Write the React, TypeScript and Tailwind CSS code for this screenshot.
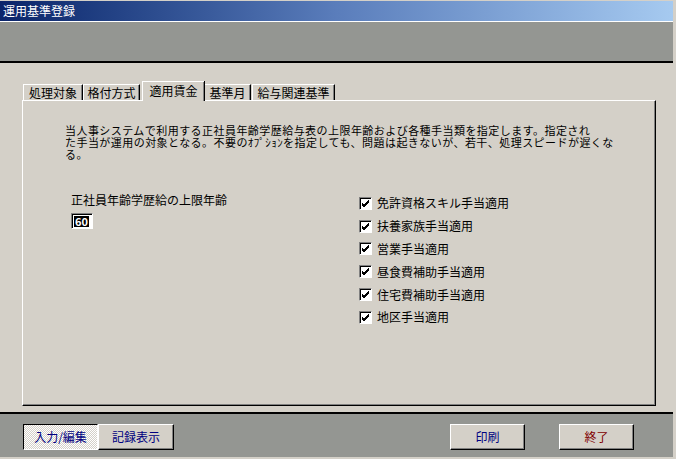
import React from "react";

const tabs = [
  { label: "処理対象", cls: "ml-[1px] w-[60px]" },
  { label: "格付方式", cls: "w-[57px]" },
  { label: "適用賃金", cls: "ml-[2px] w-[62px]", active: true },
  { label: "基準月", cls: "w-[47px]" },
  { label: "給与関連基準", cls: "ml-[1px] w-[83px]" },
];

const options = [
  "免許資格スキル手当適用",
  "扶養家族手当適用",
  "営業手当適用",
  "昼食費補助手当適用",
  "住宅費補助手当適用",
  "地区手当適用",
];

function CheckBox() {
  return (
    <span className="flex h-[13px] w-[13px] items-center justify-center border border-t-[#808080] border-l-[#808080] border-r-white border-b-white bg-white shadow-[inset_1px_1px_0_#000]">
      <svg width="9" height="9" viewBox="0 0 9 9">
        <path d="M1 4 L3 6 L8 1 M1 5 L3 7 L8 2 M1 6 L3 8 L8 3" stroke="#000" strokeWidth="1" fill="none" />
      </svg>
    </span>
  );
}

function Button({ label, color, pressed, cls }: { label: string; color: string; pressed?: boolean; cls: string }) {
  return (
    <button
      className={
        pressed
          ? `flex h-[26px] items-center justify-center border border-t-black border-l-black border-r-white border-b-white bg-[conic-gradient(#fff_25%,#d4d0c8_0_50%,#fff_0_75%,#d4d0c8_0)] bg-size-[2px_2px] text-[12px] ${color} ${cls}`
          : `flex h-[26px] items-center justify-center border border-t-white border-l-white border-r-black border-b-black bg-[#d4d0c8] shadow-[inset_-1px_-1px_0_#808080] text-[12px] ${color} ${cls}`
      }
    >
      {label}
    </button>
  );
}

export default function App() {
  return (
    <div
      className="flex h-[459px] w-[676px] bg-[#d4d0c8] text-black"
      style={{ fontFamily: '"Noto Sans CJK JP", "Noto Sans", sans-serif' }}
    >
      <div className="flex w-[673px] flex-col">
        {/* title bar */}
        <div className="h-[21px] border-t border-[#d4d0c8] bg-linear-to-r from-[#0a246a] via-[#5a7dbb] to-[#a6caf0] pl-[3px] text-[12px] leading-[20px] text-white">
          運用基準登録
        </div>
        <div className="h-px bg-white" />
        <div className="h-[39px] bg-[#949692]" />
        <div className="h-[2px] bg-black" />

        {/* body */}
        <div className="flex h-[349px] flex-col pl-[22px] pt-[18px]">
          {/* tabs */}
          <div className="flex h-[19px] items-end">
            {tabs.map((t) =>
              t.active ? (
                <div
                  key={t.label}
                  className={`relative z-10 -mb-px flex h-[20px] items-start justify-center border-t border-l border-white bg-[#d4d0c8] pt-[1px] text-[12px] leading-[16px] shadow-[1px_0_0_#000,inset_-1px_0_0_#808080] ${t.cls}`}
                >
                  {t.label}
                </div>
              ) : (
                <div
                  key={t.label}
                  className={`flex h-[16px] items-center justify-center border-t border-l border-r border-t-white border-l-white border-r-black bg-[#d4d0c8] text-[12px] leading-[14px] shadow-[inset_-1px_0_0_#808080] ${t.cls}`}
                >
                  {t.label}
                </div>
              )
            )}
          </div>

          {/* panel */}
          <div className="h-[306px] w-[634px] border border-t-white border-l-white border-r-black border-b-black shadow-[inset_-1px_-1px_0_#808080] pl-[42px] pt-[23px]">
            <p className="text-[11px] leading-[12px] tracking-[0.45px]">
              当人事システムで利用する正社員年齢学歴給与表の上限年齢および各種手当類を指定します。指定され
              <br />
              た手当が運用の対象となる。不要のｵﾌﾟｼｮﾝを指定しても、問題は起きないが、若干、処理スピードが遅くな
              <br />
              る。
            </p>

            <div className="mt-[32px] flex">
              <div className="w-[294px] pl-[6px]">
                <div className="text-[12px] leading-[16px]">正社員年齢学歴給の上限年齢</div>
                <div className="mt-[5px] flex h-[16px] w-[22px] items-center border border-t-[#808080] border-l-[#808080] border-r-white border-b-white bg-white pl-[2px] shadow-[inset_1px_1px_0_#000]">
                  <span className="bg-black px-px text-[11px] font-bold leading-[11px] text-white">60</span>
                </div>
              </div>

              <div className="flex flex-col">
                {options.map((o) => (
                  <div key={o} className="flex h-[22.8px] items-center gap-[5px]">
                    <CheckBox />
                    <span className="text-[12px] leading-[16px]">{o}</span>
                  </div>
                ))}
              </div>
            </div>
          </div>
        </div>

        <div className="h-[2px] bg-black" />

        {/* bottom bar */}
        <div className="flex h-[43px] items-start bg-[#949692] pt-[10px]">
          <Button label="入力/編集" color="text-[#000080]" pressed cls="ml-[23px] w-[75px]" />
          <Button label="記録表示" color="text-[#000080]" cls="w-[76px]" />
          <Button label="印刷" color="text-[#000080]" cls="ml-[276px] w-[75px]" />
          <Button label="終了" color="text-[#800000]" cls="ml-[34px] w-[75px]" />
        </div>
        <div className="h-[2px] bg-[#d4d0c8]" />
      </div>
      <div className="w-[3px] border-l border-[#d4d0c8] bg-[#d4d0c8]" />
    </div>
  );
}
